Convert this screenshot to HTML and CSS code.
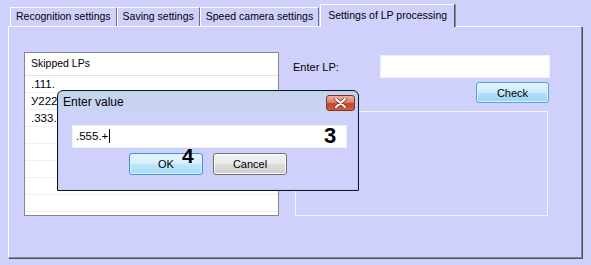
FILE: index.html
```html
<!DOCTYPE html>
<html lang="en">
<head>
  <meta charset="UTF-8">
  <title>Settings of LP processing</title>
  <link rel="stylesheet" href="styles.css">
</head>
<body>
  <div class="window">
    <div class="tabs">
      <div class="tab">Recognition settings</div>
      <div class="tab">Saving settings</div>
      <div class="tab">Speed camera settings</div>
      <div class="tab active">Settings of LP processing</div>
    </div>

    <div class="panel">
      <div class="list">
        <div class="list-head">Skipped LPs</div>
        <div class="row">.111.</div>
        <div class="row">У222</div>
        <div class="row">.333.</div>
        <div class="row"></div>
        <div class="row"></div>
        <div class="row"></div>
        <div class="row"></div>
        <div class="row"></div>
      </div>

      <div class="side">
        <div class="lp-row">
          <label for="lp">Enter LP:</label>
          <input type="text" id="lp">
        </div>
        <div class="check-row">
          <button class="btn btn-blue check">Check</button>
        </div>
        <div class="result"></div>
      </div>
    </div>

    <div class="dialog">
      <div class="dialog-title">Enter value</div>
      <div class="close-btn">
        <svg width="13" height="10" viewBox="0 0 13 10">
          <path d="M2 1 L11 9 M11 1 L2 9" stroke="#7a2a1c" stroke-width="3.4" stroke-linecap="round"/>
          <path d="M2 1 L11 9 M11 1 L2 9" stroke="#fff" stroke-width="2" stroke-linecap="round"/>
        </svg>
      </div>
      <div class="dialog-body">
        <div class="value-box">.555.+<span class="caret"></span></div>
        <div class="dialog-buttons">
          <button class="btn btn-blue">OK</button>
          <button class="btn">Cancel</button>
        </div>
      </div>
      <span class="mark mark-3">3</span>
      <span class="mark mark-4">4</span>
    </div>
  </div>
</body>
</html>
```

FILE: styles.css
```css
body {
  margin: 0;
  background: #d0d0fc;
  font-family: "Liberation Sans", Arial, sans-serif;
  font-size: 11px;
  color: #000;
}
.window {
  position: relative;
  width: 591px;
  height: 265px;
}

/* tabs */
.tabs {
  display: flex;
  align-items: flex-end;
  height: 26px;
  padding-left: 10px;
}
.tab {
  box-sizing: border-box;
  height: 19px;
  padding: 0 5px;
  line-height: 17px;
  font-size: 10.5px;
  border-top: 1px solid #fff;
  border-left: 1px solid #fff;
  border-right: 1px solid #6e6e78;
  white-space: nowrap;
}
.tab.active {
  position: relative;
  z-index: 1;
  height: 23px;
  margin-left: 1px;
  margin-bottom: -1px;
  padding: 2px 7px 0;
  background: #d0d0fc;
  border-right: 1px solid #505058;
  box-shadow: 1px 0 0 #8a8a94;
}

/* panel */
.panel {
  box-sizing: border-box;
  display: flex;
  align-items: flex-start;
  gap: 14px;
  width: 574px;
  height: 232px;
  margin-left: 8px;
  padding: 25px 0 0 15px;
  border-top: 1px solid #fff;
  border-left: 1px solid #fff;
  border-right: 1px solid #8a8a94;
  border-bottom: 1px solid #8a8a94;
  box-shadow: 1px 1px 0 #505058;
}

.list {
  box-sizing: border-box;
  width: 255px;
  height: 164px;
  overflow: hidden;
  background: #fff;
  border: 1px solid #828790;
}
.list-head {
  box-sizing: border-box;
  height: 23px;
  padding-left: 6px;
  line-height: 21px;
  font-size: 10.5px;
  border-bottom: 1px solid #e2e2e6;
}
.row {
  box-sizing: border-box;
  height: 17px;
  padding-left: 6px;
  line-height: 16px;
  font-size: 11.5px;
  border-bottom: 1px solid #f0f0f0;
}

.side {
  width: 257px;
}
.lp-row {
  display: flex;
  align-items: center;
  margin-top: 3px;
}
.lp-row label {
  width: 88px;
}
.lp-row input {
  box-sizing: border-box;
  width: 170px;
  height: 23px;
  border: 1px solid #eef2fa;
  background: #fff;
  outline: none;
}
.check-row {
  display: flex;
  justify-content: flex-end;
  margin-top: 4px;
  padding-right: 1px;
}
.result {
  box-sizing: border-box;
  height: 105px;
  margin: 8px 2px 0;
  border: 1px solid #f4f4ff;
}

/* buttons */
.btn {
  box-sizing: border-box;
  width: 74px;
  height: 22px;
  padding: 0;
  font-family: "Liberation Sans", Arial, sans-serif;
  font-size: 11px;
  color: #000;
  border: 1px solid #707070;
  border-radius: 3px;
  background: linear-gradient(#f2f2f2 0, #ebebeb 50%, #dddddd 51%, #cfcfcf 100%);
  box-shadow: inset 0 0 0 1px #fbfbfb;
}
.btn-blue {
  border-color: #3c9ad0;
  background: linear-gradient(#e6f5fd 0, #d6effc 50%, #bde6fd 51%, #a6d9f4 100%);
  box-shadow: inset 0 0 0 1px #def3fd;
}
.check {
  width: 73px;
  height: 21px;
  border-color: #47a8dc;
  background: linear-gradient(#e2f4fd 0, #cdebfb 50%, #b1e0fa 51%, #9bd6f6 100%);
}

/* dialog */
.dialog {
  position: absolute;
  left: 57px;
  top: 90px;
  box-sizing: border-box;
  width: 302px;
  height: 101px;
  border: 1px solid #151520;
  border-radius: 6px 6px 0 0;
  background: linear-gradient(#c2d5ea 0, #cbd3f4 18px, #d0d0fc 28px);
  box-shadow: inset 0 0 0 1px #a8d4ef;
}
.dialog-title {
  height: 24px;
  padding-left: 5px;
  line-height: 23px;
  font-size: 12px;
}
.close-btn {
  position: absolute;
  top: 4px;
  right: 3px;
  box-sizing: border-box;
  width: 29px;
  height: 16px;
  display: flex;
  align-items: center;
  justify-content: center;
  border: 1px solid #7e3426;
  border-radius: 3px;
  background: linear-gradient(#eab1a2 0, #d9826c 45%, #c5442a 55%, #d0603e 100%);
}
.dialog-body {
  padding: 10px 0 0 14px;
}
.value-box {
  box-sizing: border-box;
  width: 275px;
  height: 23px;
  padding-left: 3px;
  line-height: 21px;
  font-size: 11.5px;
  background: #fff;
  border: 1px solid #eef2fa;
}
.caret {
  display: inline-block;
  width: 1px;
  height: 14px;
  margin-left: 1px;
  vertical-align: -3px;
  background: #000;
}
.dialog-buttons {
  display: flex;
  justify-content: center;
  gap: 10px;
  width: 300px;
  margin: 5px 0 0 -14px;
}

/* annotation numbers */
.mark {
  position: absolute;
  font-weight: bold;
  line-height: 1;
}
.mark-3 {
  left: 266px;
  top: 34px;
  font-size: 22px;
}
.mark-4 {
  left: 124px;
  top: 54px;
  font-size: 21px;
}
```
